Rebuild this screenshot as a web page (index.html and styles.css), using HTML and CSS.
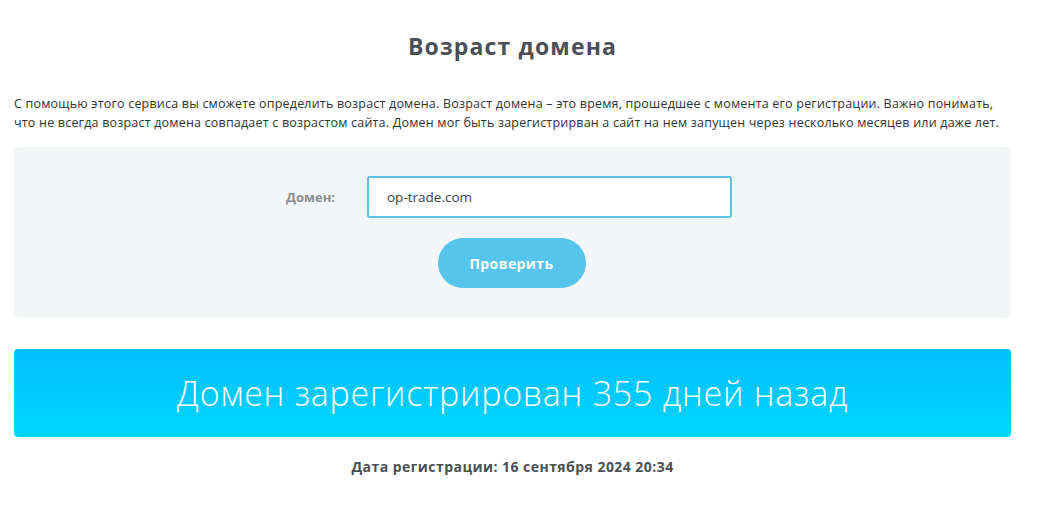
FILE: index.html
```html
<!DOCTYPE html>
<html lang="ru">
<head>
<meta charset="utf-8">
<title>Возраст домена</title>
<link rel="stylesheet" href="styles.css">
</head>
<body>
<div class="page">
  <h1 class="title">Возраст домена</h1>
  <p class="intro">С помощью этого сервиса вы сможете определить возраст домена. Возраст домена – это время, прошедшее с момента его регистрации. Важно понимать, что не всегда возраст домена совпадает с возрастом сайта. Домен мог быть зарегистрирван а сайт на нем запущен через несколько месяцев или даже лет.</p>
  <form class="panel">
    <div class="row">
      <label class="label" for="domain">Домен:</label>
      <input class="input" id="domain" type="text" value="op-trade.com">
    </div>
    <button class="btn" type="button">Проверить</button>
  </form>
  <div class="result">Домен зарегистрирован 355 дней назад</div>
  <div class="date">Дата регистрации: 16 сентября 2024 20:34</div>
</div>
</body>
</html>
```
FILE: styles.css
```css
* { box-sizing: border-box; }
html, body { margin: 0; padding: 0; background: #fff; }
body { font-family: "Open Sans", "Noto Sans", sans-serif; color: #4a4f55; }
.page { width: 997px; margin-left: 14px; padding-top: 30px; }
.title { margin: 0; text-align: center; font-size: 23px; font-weight: 700; line-height: 32px; letter-spacing: 1.15px; color: #4a4f55; }
.intro { margin: 32px 0 0; font-size: 12.5px; line-height: 19px; letter-spacing: 0.2px; color: #2e3236; }
.panel { margin-top: 15px; background: #f3f6f7; border-radius: 6px; height: 171px; padding-top: 29px; display: flex; flex-direction: column; align-items: center; }
.row { display: flex; align-items: center; margin-left: -7px; }
.label { width: 81px; font-size: 13px; font-weight: 700; color: #8a8d90; }
.input { width: 365px; height: 42px; border: 2px solid #5bc3ea; border-radius: 3px; background: #fff; padding: 0 18px; font-family: inherit; font-size: 13.5px; color: #3a3e42; outline: none; }
.btn { margin-top: 20px; margin-left: -2px; width: 148px; height: 50px; border: none; border-radius: 25px; background: #56c5ec; color: #fff; font-family: inherit; font-weight: 700; font-size: 14px; letter-spacing: 0.4px; }
.result { margin-top: 31px; height: 88px; border-radius: 4px; background: linear-gradient(#00bfff, #00d5ff); color: #fff; display: flex; align-items: center; justify-content: center; font-size: 34px; font-weight: 300; letter-spacing: 0.75px; }
.date { margin-top: 20px; text-align: center; font-size: 14px; font-weight: 700; letter-spacing: 0.45px; color: #4a4f55; }
```
